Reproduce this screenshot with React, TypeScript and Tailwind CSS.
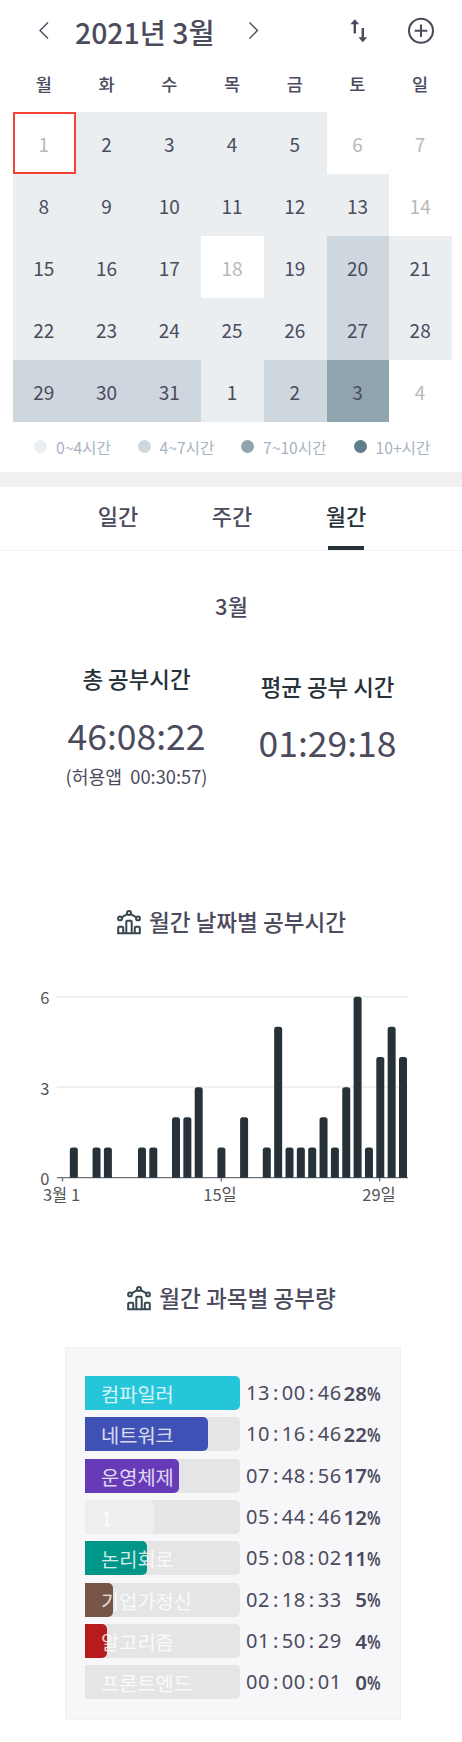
const WEEKDAYS = ["월", "화", "수", "목", "금", "토", "일"];

// study level per day: 0 none, 1 0~4h, 2 4~7h, 3 7~10h
const DAYS: [number, number][] = [
  [1, 0], [2, 1], [3, 1], [4, 1], [5, 1], [6, 0], [7, 0],
  [8, 1], [9, 1], [10, 1], [11, 1], [12, 1], [13, 1], [14, 0],
  [15, 1], [16, 1], [17, 1], [18, 0], [19, 1], [20, 2], [21, 1],
  [22, 1], [23, 1], [24, 1], [25, 1], [26, 1], [27, 2], [28, 1],
  [29, 2], [30, 2], [31, 2], [1, 1], [2, 2], [3, 3], [4, 0],
];

const LEVELS = [
  "text-[#b9b9b9]",
  "bg-[#eaeef1] text-[#4b4b5d]",
  "bg-[#cfd7de] text-[#4b4b5d]",
  "bg-[#90a4ad] text-[#4b4b5d]",
];

const LEGEND = [
  { label: "0~4시간", dot: "bg-[#eceff1]", gap: "w-[103.5px]" },
  { label: "4~7시간", dot: "bg-[#cfd8dc]", gap: "w-[103.5px]" },
  { label: "7~10시간", dot: "bg-[#90a4ae]", gap: "w-[112.5px]" },
  { label: "10+시간", dot: "bg-[#607d8b]", gap: "w-[80px]" },
];

const HOURS = [0, 1, 0, 1, 1, 0, 0, 1, 1, 0, 2, 2, 3, 0, 1, 0, 2, 0, 1, 5, 1, 1, 1, 2, 1, 3, 6, 1, 4, 5, 4];

const SUBJECTS = [
  { name: "컴파일러", time: "13:00:46", percent: 28, width: 155, color: "bg-[#26c6da]" },
  { name: "네트워크", time: "10:16:46", percent: 22, width: 123, color: "bg-[#3f51b5]" },
  { name: "운영체제", time: "07:48:56", percent: 17, width: 93.5, color: "bg-[#673ab7]" },
  { name: "1", time: "05:44:46", percent: 12, width: 69, color: "bg-[#eeeeee]" },
  { name: "논리회로", time: "05:08:02", percent: 11, width: 61.5, color: "bg-[#009688]" },
  { name: "기업가정신", time: "02:18:33", percent: 5, width: 28, color: "bg-[#795548]" },
  { name: "알고리즘", time: "01:50:29", percent: 4, width: 22, color: "bg-[#b71c1c]" },
  { name: "프론트엔드", time: "00:00:01", percent: 0, width: 0, color: "bg-transparent" },
];

function Header() {
  return (
    <header className="flex h-[62px] items-center pl-[38px] text-[#4b4b5d]">
      <svg width="12" height="20" viewBox="0 0 12 20" fill="none" stroke="currentColor" strokeWidth="1.4">
        <path d="M10 1.5 L2 9.5 L10 17.5" />
      </svg>
      <h1 className="ml-[25px] w-[140px] pt-px text-[28.4px] leading-[39px] font-medium whitespace-nowrap">2021년 3월</h1>
      <svg className="ml-[33px]" width="12" height="20" viewBox="0 0 12 20" fill="none" stroke="currentColor" strokeWidth="1.4">
        <path d="M1.5 1.5 L9.5 9.5 L1.5 17.5" />
      </svg>
      <svg className="ml-[89px]" width="20" height="26" viewBox="0 0 20 26" fill="none" stroke="currentColor" strokeWidth="2.4">
        <path d="M5.8 15.5 V4 M13.8 10 V21.5" />
        <path d="M1.4 6.3 L5.8 1.2 L10.2 6.3 Z M9.4 19.2 L13.8 24.3 L18.2 19.2 Z" fill="currentColor" stroke="none" />
      </svg>
      <svg className="ml-[38px]" width="28" height="28" viewBox="0 0 28 28" fill="none" stroke="currentColor" strokeWidth="2.1">
        <circle cx="14" cy="13.7" r="12" />
        <path d="M14 7.4 V20 M7.7 13.7 H20.3" />
      </svg>
    </header>
  );
}

function Calendar() {
  return (
    <section className="px-[13px]">
      <div className="grid h-[50px] w-[439px] grid-cols-7 text-center text-[17.5px] leading-[44px] font-medium text-[#4b4b5d]">
        {WEEKDAYS.map((day) => (
          <span key={day} className="pr-px">{day}</span>
        ))}
      </div>
      <div className="grid w-[439px] auto-rows-[62px] grid-cols-7">
        {DAYS.map(([day, level], i) => (
          <div
            key={i}
            className={`flex items-center justify-center pt-[2px] pr-px text-[19px] ${LEVELS[level]} ${i === 0 ? "border-2 border-[#f44336]" : ""}`}
          >
            {day}
          </div>
        ))}
      </div>
    </section>
  );
}

function Legend() {
  return (
    <div className="flex h-[50px] items-center pl-[34px] text-[15.7px] whitespace-nowrap text-[#a9b4c2]">
      {LEGEND.map((item) => (
        <div key={item.label} className={`flex shrink-0 items-center ${item.gap}`}>
          <span className={`size-[13px] shrink-0 rounded-full ${item.dot}`} />
          <span className="ml-[9px] pt-[2px]">{item.label}</span>
        </div>
      ))}
    </div>
  );
}

function Tabs() {
  return (
    <nav className="flex h-[64px] justify-center border-b border-[#f3f3f3] pl-[2px] text-[22px] leading-[57px] font-medium text-[#4b4b5d]">
      <span className="w-[114px] text-center">일간</span>
      <span className="w-[114px] text-center">주간</span>
      <span className="flex w-[114px] flex-col items-center justify-between text-[#263238]">
        월간
        <span className="h-[4px] w-[36px] shrink-0 bg-[#263238]" />
      </span>
    </nav>
  );
}

function ChartIcon() {
  return (
    <svg className="shrink-0 text-[#37474f]" width="24" height="25" viewBox="0 0 24 25" fill="none" stroke="currentColor" strokeWidth="2">
      <circle cx="12" cy="3" r="2" />
      <circle cx="3" cy="8.4" r="1.9" />
      <circle cx="21" cy="8.4" r="1.9" />
      <path d="M4.6 7.3 L10.2 4.1 M13.8 4.1 L19.4 7.3" />
      <path d="M1.2 23 V17.8 q0 -1 1 -1 h3 q1 0 1 1 V23 M9.3 23 V11.8 q0 -1 1 -1 h3.4 q1 0 1 1 V23 M17.8 23 V17.8 q0 -1 1 -1 h3 q1 0 1 1 V23 M0.2 23.2 H23.8" />
    </svg>
  );
}

function SectionTitle({ children }: { children: string }) {
  return (
    <h2 className="flex h-[40px] items-center justify-center gap-[8px] pl-px text-[22.6px] leading-[40px] font-medium whitespace-nowrap text-[#4b4b5d]">
      <ChartIcon />
      {children}
    </h2>
  );
}

function DailyChart() {
  return (
    <svg className="block" width="462" height="250" viewBox="0 0 462 250" fontSize="16.5" fill="#555">
      <path d="M57 36.7 H408 M57 127 H408" stroke="#ececec" strokeWidth="1.5" />
      <path d="M57 217.7 H408 M62.5 217.7 V221.5 M221.3 217.7 V221.5 M379.7 217.7 V221.5" stroke="#6e7079" strokeWidth="1.3" />
      {HOURS.map((h, i) => {
        if (!h) return null;
        const x = 58.5 + i * 11.35;
        const top = 217.7 - h * 30.17;
        return (
          <path
            key={i}
            d={`M${x} 217.7 V${top + 2.5} q0 -2.5 2.5 -2.5 h3 q2.5 0 2.5 2.5 V217.7 Z`}
            fill="#263238"
          />
        );
      })}
      <g textAnchor="end">
        <text x="49.5" y="44">6</text>
        <text x="49.5" y="134.5">3</text>
        <text x="49.5" y="224.7">0</text>
      </g>
      <g textAnchor="middle">
        <text x="61.5" y="241">3월 1</text>
        <text x="220" y="241">15일</text>
        <text x="379" y="241">29일</text>
      </g>
    </svg>
  );
}

function Clock({ value }: { value: string }) {
  const [h, m, s] = value.split(":");
  return (
    <span className="w-[96px] text-[20px] tracking-[0.5px] whitespace-nowrap">
      {h}
      <span className="pl-[3px] tracking-[3.6px]">:</span>
      {m}
      <span className="pl-[3px] tracking-[3.6px]">:</span>
      {s}
    </span>
  );
}

function SubjectChart() {
  return (
    <div className="ml-[64.5px] flex h-[373px] w-[336px] flex-col gap-[7.33px] border border-[#f2f2f4] bg-[#f7f7fa] pt-[28px] pl-[19.5px]">
      {SUBJECTS.map((s) => (
        <div key={s.name} className="flex h-[34px] shrink-0 items-center text-[#4b4b5d]">
          <div className="relative h-full w-[155px] shrink-0 rounded-r-[5px] bg-[#e5e5e5]">
            <div className={`h-full rounded-r-[5px] ${s.color}`} style={{ width: s.width }} />
            <span className="absolute top-px left-[16px] text-[19.8px] leading-[34px] whitespace-nowrap text-white/80">{s.name}</span>
          </div>
          <div className="flex h-full items-center pl-[6px] font-['Noto_Sans']">
            <Clock value={s.time} />
            <span className="flex w-[38px] justify-end text-[20.5px] font-semibold">
              {s.percent}
              <span className="w-[13px] origin-left scale-x-[0.76]">%</span>
            </span>
          </div>
        </div>
      ))}
    </div>
  );
}

export default function App() {
  return (
    <main className="h-[1742px] w-[462px] overflow-hidden bg-white font-['Noto_Sans_CJK_KR',sans-serif]">
      <Header />
      <Calendar />
      <Legend />
      <div className="h-[15px] bg-[#f0f0f3]" />
      <Tabs />

      <p className="mt-[34px] pl-px text-center text-[22px] leading-[40px] font-medium text-[#4b4b5d]">3월</p>

      <section className="mt-[33px] flex h-[180px] justify-center pl-[2px] text-center whitespace-nowrap text-[#4b4b5d]">
        <div className="w-[191px]">
          <h3 className="text-[22.4px] leading-[40px] font-medium text-[#263238]">총 공부시간</h3>
          <p className="mt-[14px] text-[35.5px] leading-[46px]">46:08:22</p>
          <p className="mt-[2px] text-[18.3px] leading-[32px] whitespace-pre">(허용앱  00:30:57)</p>
        </div>
        <div className="w-[191px] pt-[8px]">
          <h3 className="text-[22.4px] leading-[40px] font-medium text-[#263238]">평균 공부 시간</h3>
          <p className="mt-[13px] text-[35.5px] leading-[46px]">01:29:18</p>
        </div>
      </section>

      <div className="mt-[64px]">
        <SectionTitle>월간 날짜별 공부시간</SectionTitle>
      </div>
      <div className="mt-[18px]">
        <DailyChart />
      </div>
      <div className="mt-[68px] mb-[29px]">
        <SectionTitle>월간 과목별 공부량</SectionTitle>
      </div>
      <SubjectChart />
    </main>
  );
}
